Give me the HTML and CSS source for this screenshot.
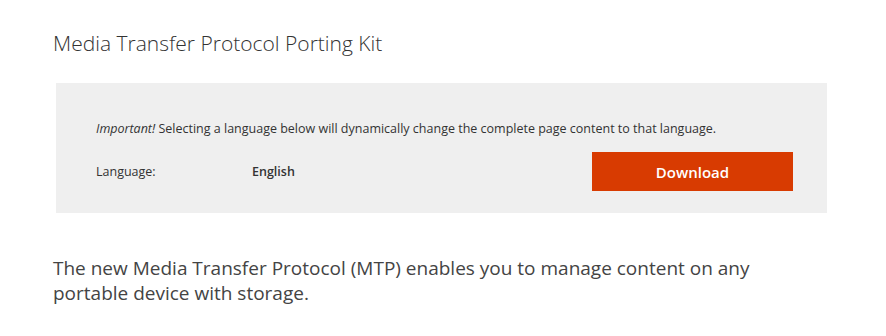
FILE: index.html
```html
<!DOCTYPE html>
<html>
<head>
<meta charset="utf-8">
<link rel="stylesheet" href="styles.css">
</head>
<body>
<div class="page">
  <h1 class="title">Media Transfer Protocol Porting Kit</h1>
  <div class="panel">
    <p class="notice"><em>Important!</em> Selecting a language below will dynamically change the complete page content to that language.</p>
    <div class="row">
      <span class="label">Language:</span>
      <span class="lang">English</span>
      <a class="download">Download</a>
    </div>
  </div>
  <p class="desc">The new Media Transfer Protocol (MTP) enables you to manage content on any portable device with storage.</p>
</div>
</body>
</html>
```
FILE: styles.css
```css
html, body { margin: 0; padding: 0; background: #fff; }
body { font-family: "Open Sans", "Noto Sans", sans-serif; color: #333; }
.page { padding: 29px 0 0 56px; width: 771px; }
.title { margin: 0 0 0 -3px; font-weight: 300; font-size: 21px; line-height: 28px; color: #333; }
.panel { margin-top: 26px; background: #efefef; height: 130px; box-sizing: border-box; padding: 37px 40px 0 40px; }
.notice { margin: 0; font-size: 12.5px; line-height: 17px; color: #333; }
.notice em { font-style: italic; }
.row { display: flex; align-items: center; margin-top: 15px; }
.label { font-size: 12.5px; width: 156px; }
.lang { font-size: 12.5px; font-weight: 600; flex: 1; }
.download { width: 201px; height: 39px; background: #d83b01; color: #fff; font-size: 15px; font-weight: 600; display: flex; align-items: center; justify-content: center; margin-right: -6px; }
.desc { margin: 43px 0 0 -3px; font-size: 19px; line-height: 25px; color: #444; width: 720px; }
```
